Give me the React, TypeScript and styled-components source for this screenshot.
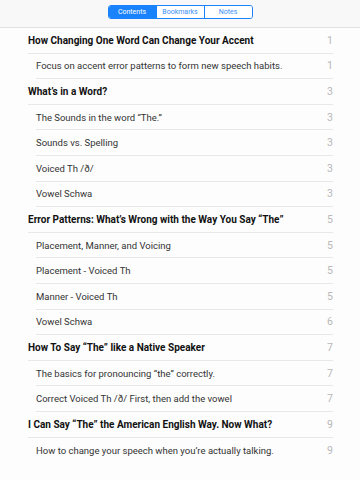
import styled, { createGlobalStyle } from 'styled-components';

const GlobalStyle = createGlobalStyle`
    body {
        margin: 0;
        background: #ffffff;
        font-family: Roboto, 'Liberation Sans', Arial, sans-serif;
    }
`;

const entries = [
    { title: 'How Changing One Word Can Change Your Accent', page: 1, level: 0 },
    { title: 'Focus on accent error patterns to form new speech habits.', page: 1, level: 1 },
    { title: 'What\u2019s in a Word?', page: 3, level: 0 },
    { title: 'The Sounds in the word \u201CThe.\u201D', page: 3, level: 1 },
    { title: 'Sounds vs. Spelling', page: 3, level: 1 },
    { title: 'Voiced Th /\u00F0/', page: 3, level: 1 },
    { title: 'Vowel Schwa', page: 3, level: 1 },
    { title: 'Error Patterns: What\u2019s Wrong with the Way You Say \u201CThe\u201D', page: 5, level: 0 },
    { title: 'Placement, Manner, and Voicing', page: 5, level: 1 },
    { title: 'Placement - Voiced Th', page: 5, level: 1 },
    { title: 'Manner - Voiced Th', page: 5, level: 1 },
    { title: 'Vowel Schwa', page: 6, level: 1 },
    { title: 'How To Say \u201CThe\u201D like a Native Speaker', page: 7, level: 0 },
    { title: 'The basics for pronouncing \u201Cthe\u201D correctly.', page: 7, level: 1 },
    { title: 'Correct Voiced Th /\u00F0/ First, then add the vowel', page: 7, level: 1 },
    { title: 'I Can Say \u201CThe\u201D the American English Way. Now What?', page: 9, level: 0 },
    { title: 'How to change your speech when you\u2019re actually talking.', page: 9, level: 1 },
];

const tabs = ['Contents', 'Bookmarks', 'Notes'];

const App = () => {
    return (
        <>
            <GlobalStyle />
            <Page>
                <Toolbar>
                    <Segmented>
                        {tabs.map((tab, i) => (
                            <Segment key={tab} active={i === 0}>
                                {tab}
                            </Segment>
                        ))}
                    </Segmented>
                </Toolbar>
                <List>
                    {entries.map((entry, i) => (
                        <Row
                            key={i}
                            indent={entry.level === 1}
                            last={i === entries.length - 1}
                        >
                            <Title bold={entry.level === 0}>{entry.title}</Title>
                            <PageNo>{entry.page}</PageNo>
                        </Row>
                    ))}
                </List>
            </Page>
        </>
    );
};

const Page = styled.div`
    width: 360px;
    height: 480px;
    background: #fdfdfd;
    overflow: hidden;
`;

const Toolbar = styled.div`
    height: 28px;
    display: flex;
    justify-content: center;
    align-items: flex-start;
    padding-top: 5px;
    box-sizing: border-box;
    background: #f8f8f8;
    border-bottom: 1px solid #e3e3e3;
`;

const Segmented = styled.div`
    display: flex;
    border: 1px solid #1a82fb;
    border-radius: 3px;
    overflow: hidden;
`;

const Segment = styled.div<{ active: boolean }>`
    width: 47px;
    height: 12px;
    display: flex;
    align-items: center;
    justify-content: center;
    font-size: 7px;
    color: ${(p) => (p.active ? '#ffffff' : '#3a8ff5')};
    background: ${(p) => (p.active ? '#1a82fb' : '#ffffff')};
    & + & {
        border-left: 1px solid #1a82fb;
    }
`;

const List = styled.div`
    padding: 0 27px 0 28px;
`;

const Row = styled.div<{ indent: boolean; last: boolean }>`
    height: 25.6px;
    box-sizing: border-box;
    margin-left: ${(p) => (p.indent ? '8px' : '0')};
    display: flex;
    align-items: center;
    justify-content: space-between;
    border-bottom: ${(p) => (p.last ? 'none' : '1px solid #e8e8e8')};
`;

const Title = styled.span<{ bold: boolean }>`
    font-size: ${(p) => (p.bold ? '10px' : '9.5px')};
    font-weight: ${(p) => (p.bold ? 700 : 400)};
    color: ${(p) => (p.bold ? '#111111' : '#333333')};
    white-space: nowrap;
`;

const PageNo = styled.span`
    font-size: 10.5px;
    color: #b8b8b8;
`;

export default App;
